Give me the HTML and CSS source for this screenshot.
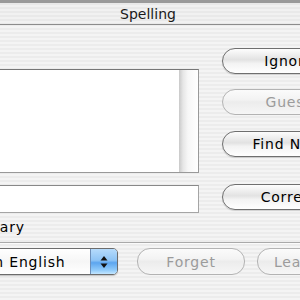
FILE: index.html
```html
<!DOCTYPE html>
<html lang="en">
<head>
    <meta charset="UTF-8">
    <title>Spelling</title>
    <link rel="stylesheet" href="styles.css">
</head>
<body>
    <div class="panel">
        <div class="titlebar"><span class="title">Spelling</span></div>

        <div class="main">
            <div class="left">
                <div class="guesses"><div class="scroll"></div></div>
                <div class="word"></div>
                <div class="dict-label">Dictionary</div>
            </div>
            <div class="actions">
                <button class="aqua ignore">Ignore</button>
                <button class="aqua guess" disabled>Guess</button>
                <button class="aqua next">Find Next</button>
                <button class="aqua correct">Correct</button>
            </div>
        </div>

        <div class="divider"></div>

        <div class="dict-row">
            <div class="popup">
                <span class="popup-text">American English</span>
                <span class="stepper">
                    <svg width="8" height="14" viewBox="0 0 8 14">
                        <path d="M4 1 L7.5 5.5 L0.5 5.5 Z" fill="#111"/>
                        <path d="M4 13 L7.5 8.5 L0.5 8.5 Z" fill="#111"/>
                    </svg>
                </span>
            </div>
            <button class="aqua forget" disabled>Forget</button>
            <button class="aqua learn" disabled>Learn</button>
        </div>
    </div>
</body>
</html>
```

FILE: styles.css
```css
body {
    margin: 0;
    width: 300px;
    height: 300px;
    overflow: hidden;
    font-family: "DejaVu Sans", "Liberation Sans", sans-serif;
    font-size: 14px;
    letter-spacing: 0.8px;
    color: #000;
    background: repeating-linear-gradient(#ececec 0 2px, #f4f4f4 2px 4px);
}
.panel {
    width: 300px;
}
/* title bar */
.titlebar {
    height: 21px;
    border-top: 3px solid #9a9a9a;
    border-bottom: 1px solid #8c8c8c;
    background: repeating-linear-gradient(#e9e9e9 0 2px, #f1f1f1 2px 4px);
    text-align: center;
    padding-right: 4px;
}
.title {
    display: inline-block;
    line-height: 21px;
    padding-top: 1px;
    letter-spacing: 0;
    color: #1a1a1a;
}
/* top part */
.main {
    display: grid;
    grid-template-columns: 254px 134px;
    column-gap: 23px;
    margin-left: -55px;
    height: 217px;
}
.guesses {
    margin-top: 44px;
    height: 102px;
    background: #fff;
    border: 1px solid #999;
    border-top-color: #777;
    display: flex;
    justify-content: flex-end;
}
.scroll {
    width: 19px;
    background: linear-gradient(to right, #c9c9c9, #e6e6e6 4px, #f7f7f7 9px, #fff);
}
.word {
    margin-top: 12px;
    height: 26px;
    background: #fff;
    border: 1px solid #a5a5a5;
    border-top-color: #888;
}
.dict-label {
    margin-top: 6px;
    line-height: 17px;
}
.actions {
    display: flex;
    flex-direction: column;
}
.aqua {
    font-family: "DejaVu Sans", "Liberation Sans", sans-serif;
    font-size: 14px;
    letter-spacing: 0.8px;
    color: #000;
    height: 26px;
    padding: 0;
    border: 1px solid #6f6f6f;
    border-radius: 13px;
    background: linear-gradient(#fdfdfd, #f1f1f1 20%, #e2e2e2 45%, #f3f3f3 60%, #ffffff);
    box-shadow: 0 1px 1px rgba(0,0,0,0.15);
}
.aqua:disabled {
    color: #9b9b9b;
    border-color: #b3b3b3;
    background: linear-gradient(#fbfbfb, #f3f3f3 40%, #ececec 50%, #f6f6f6);
    box-shadow: none;
}
.ignore { margin-top: 23px; }
.guess { margin-top: 15px; }
.next { margin-top: 16px; }
.correct { margin-top: 27px; }
/* separator */
.divider {
    border-top: 1px solid #a9a9a9;
    border-bottom: 1px solid #fafafa;
}
/* dictionary row */
.dict-row {
    display: flex;
    margin-top: 4px;
    margin-left: -82px;
}
.popup {
    flex: none;
    width: 198px;
    height: 25px;
    display: flex;
    align-items: center;
    background: linear-gradient(#fff, #f6f6f6 50%, #fff);
    border: 1px solid #6c6c6c;
    border-radius: 5px;
    overflow: hidden;
    box-shadow: 0 1px 1px rgba(0,0,0,0.2);
}
.popup-text {
    flex: 1;
    padding-left: 12px;
}
.stepper {
    width: 26px;
    height: 25px;
    display: flex;
    align-items: center;
    justify-content: center;
    border-left: 1px solid #6e8fb8;
    background: linear-gradient(#b6dbfb, #8ec4f5 45%, #5ca5ef 55%, #92ccfa 85%, #c4e6ff);
}
.forget {
    flex: none;
    width: 108px;
    height: 27px;
    margin-left: 19px;
}
.learn {
    flex: none;
    width: 90px;
    height: 27px;
    margin-left: 12px;
    text-align: left;
    padding-left: 16px;
}
```
